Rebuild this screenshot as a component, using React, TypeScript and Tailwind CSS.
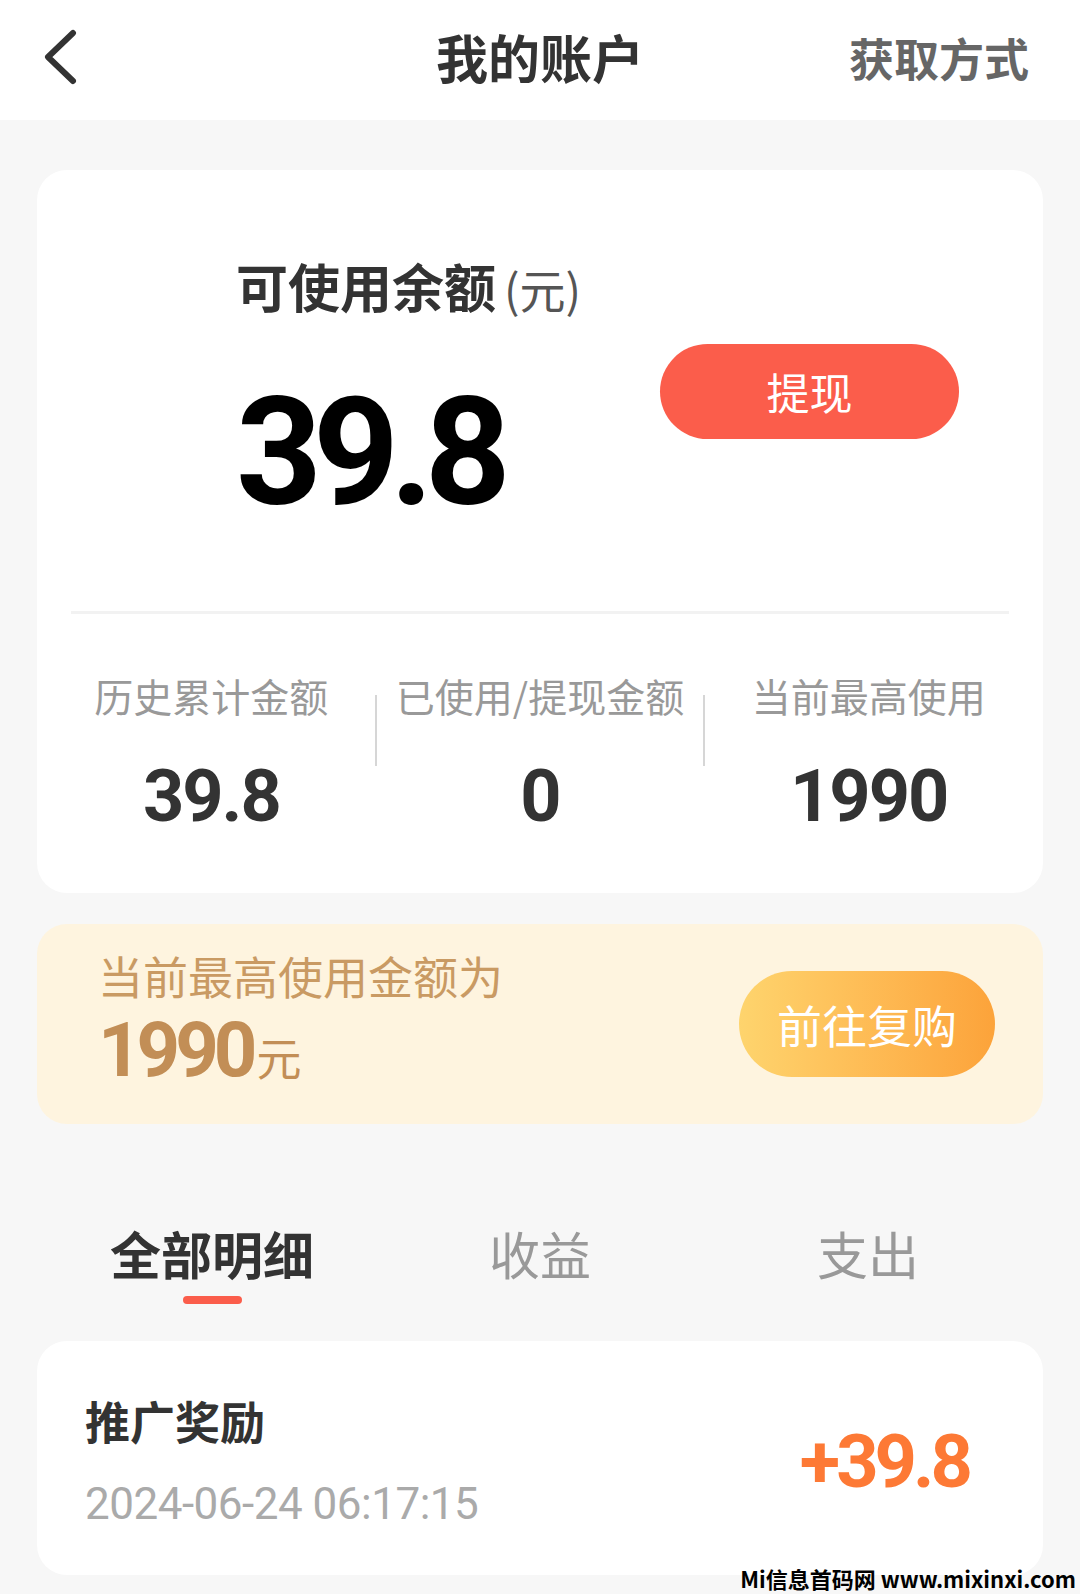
import React from 'react';

const cjk = "font-['Noto_Sans_CJK_SC','Noto_Sans',sans-serif]";
const num = "font-['Roboto','Noto_Sans_CJK_SC',sans-serif]";

const stats = [
  { label: '历史累计金额', value: '39.8' },
  { label: '已使用/提现金额', value: '0' },
  { label: '当前最高使用', value: '1990' },
];

const tabs = ['全部明细', '收益', '支出'];

export default function App() {
  return (
    <div className={`relative w-[1080px] h-[1594px] overflow-hidden bg-[#f7f7f7] ${cjk}`}>
      {/* header */}
      <header className="h-[120px] bg-white grid grid-cols-3 items-center pb-[6px]">
        <div className="pl-[40px]">
          <svg width="40" height="56" viewBox="0 0 40 56" fill="none">
            <path d="M33 4 L8 28 L33 52" stroke="#333" strokeWidth="6" strokeLinecap="round" strokeLinejoin="round" />
          </svg>
        </div>
        <h1 className="text-center text-[52px] leading-none font-bold text-[#333] whitespace-nowrap">我的账户</h1>
        <div className="text-right pr-[51px] text-[45px] leading-none font-bold text-[#666] whitespace-nowrap">获取方式</div>
      </header>

      {/* balance card */}
      <section className="mx-[37px] mt-[50px] h-[723px] rounded-[30px] bg-white flex flex-col">
        <div className="flex items-start justify-between pt-[90px] pl-[199px] pr-[84px]">
          <div className="flex flex-col">
            <div className="flex items-baseline leading-none whitespace-nowrap">
              <span className="text-[52px] font-bold text-[#333]">可使用余额</span>
              <span className="text-[46px] text-[#555] ml-[8px]">(元)</span>
            </div>
            <div className={`${num} mt-[66px] text-[150px] leading-none font-bold text-black tracking-[-9px]`}>39.8</div>
          </div>
          <button className="mt-[84px] w-[299px] h-[95px] rounded-full bg-[#fb5d4b] text-white text-[43px] leading-none">
            提现
          </button>
        </div>

        <div className="mt-[83px] mx-[34px] h-[3px] bg-[#f2f2f2]" />

        <div className="mt-[62px] px-[11px] flex items-start">
          {stats.map((s, i) => (
            <React.Fragment key={s.label}>
              {i > 0 && <div className="w-[2px] h-[71px] mt-[19px] bg-[#d6d6d6]" />}
              <div className="flex-1 flex flex-col items-center">
                <span className="text-[39px] leading-none text-[#999] whitespace-nowrap">{s.label}</span>
                <span className={`${num} mt-[46px] text-[72px] leading-none font-bold text-[#333] tracking-[-2px]`}>{s.value}</span>
              </div>
            </React.Fragment>
          ))}
        </div>
      </section>

      {/* limit card */}
      <section className="mx-[37px] mt-[31px] h-[200px] rounded-[30px] bg-[#fef4df] flex items-center justify-between pl-[61px] pr-[48px]">
        <div className="flex flex-col self-start pt-[29px]">
          <span className="text-[45px] leading-none text-[#c99a63] whitespace-nowrap">当前最高使用金额为</span>
          <div className="mt-[22px] flex items-baseline leading-[60px] text-[#c28e56]">
            <span className={`${num} text-[76px] font-bold tracking-[-5px]`}>1990</span>
            <span className="text-[45px] ml-[4px]">元</span>
          </div>
        </div>
        <button className="w-[256px] h-[106px] rounded-full bg-gradient-to-r from-[#fed46d] to-[#fca33a] text-white text-[45px] leading-none">
          前往复购
        </button>
      </section>

      {/* tabs */}
      <nav className="mx-[37px] mt-[104px] px-[11px] flex">
        {tabs.map((t, i) => (
          <div key={t} className="flex-1 flex flex-col items-center">
            <span className={`text-[51px] leading-none whitespace-nowrap ${i === 0 ? 'font-bold text-[#333]' : 'text-[#999]'}`}>{t}</span>
            <div className={`mt-[17px] w-[59px] h-[8px] rounded-full ${i === 0 ? 'bg-[#fb5d4b]' : 'bg-transparent'}`} />
          </div>
        ))}
      </nav>

      {/* record */}
      <section className="mx-[37px] mt-[37px] h-[234px] rounded-[30px] bg-white flex items-center justify-between pl-[48px] pr-[74px]">
        <div className="flex flex-col self-start pt-[57px]">
          <span className="text-[45px] leading-none font-bold text-[#333]">推广奖励</span>
          <span className={`${num} mt-[39px] text-[44px] leading-none text-[#aaa] tracking-[-0.5px]`}>2024-06-24 06:17:15</span>
        </div>
        <span className={`${num} text-[74px] leading-none font-bold text-[#fd7935] tracking-[-4px] mt-[8px]`}>+39.8</span>
      </section>

      <div className="absolute right-[4px] bottom-0 text-[22px] leading-[1.4] font-bold text-black whitespace-nowrap">
        Mi信息首码网 www.mixinxi.com
      </div>
    </div>
  );
}
